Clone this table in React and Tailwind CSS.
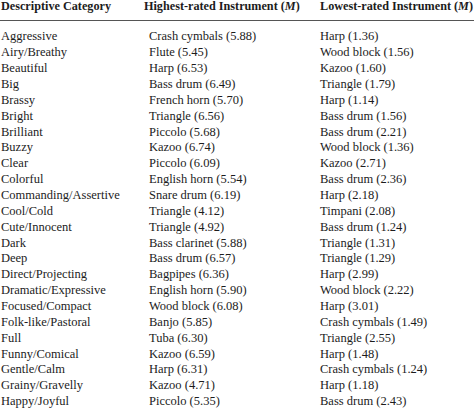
const ROWS = [
  ["Aggressive", "Crash cymbals (5.88)", "Harp (1.36)"],
  ["Airy/Breathy", "Flute (5.45)", "Wood block (1.56)"],
  ["Beautiful", "Harp (6.53)", "Kazoo (1.60)"],
  ["Big", "Bass drum (6.49)", "Triangle (1.79)"],
  ["Brassy", "French horn (5.70)", "Harp (1.14)"],
  ["Bright", "Triangle (6.56)", "Bass drum (1.56)"],
  ["Brilliant", "Piccolo (5.68)", "Bass drum (2.21)"],
  ["Buzzy", "Kazoo (6.74)", "Wood block (1.36)"],
  ["Clear", "Piccolo (6.09)", "Kazoo (2.71)"],
  ["Colorful", "English horn (5.54)", "Bass drum (2.36)"],
  ["Commanding/Assertive", "Snare drum (6.19)", "Harp (2.18)"],
  ["Cool/Cold", "Triangle (4.12)", "Timpani (2.08)"],
  ["Cute/Innocent", "Triangle (4.92)", "Bass drum (1.24)"],
  ["Dark", "Bass clarinet (5.88)", "Triangle (1.31)"],
  ["Deep", "Bass drum (6.57)", "Triangle (1.29)"],
  ["Direct/Projecting", "Bagpipes (6.36)", "Harp (2.99)"],
  ["Dramatic/Expressive", "English horn (5.90)", "Wood block (2.22)"],
  ["Focused/Compact", "Wood block (6.08)", "Harp (3.01)"],
  ["Folk-like/Pastoral", "Banjo (5.85)", "Crash cymbals (1.49)"],
  ["Full", "Tuba (6.30)", "Triangle (2.55)"],
  ["Funny/Comical", "Kazoo (6.59)", "Harp (1.48)"],
  ["Gentle/Calm", "Harp (6.31)", "Crash cymbals (1.24)"],
  ["Grainy/Gravelly", "Kazoo (4.71)", "Harp (1.18)"],
  ["Happy/Joyful", "Piccolo (5.35)", "Bass drum (2.43)"],
];

export default function App() {
  return (
    <div className="w-[474px] h-[411px] overflow-hidden bg-white text-[#1c1c1c] font-['Liberation_Serif',serif] text-[12.5px]">
      {/* header */}
      <div className="flex leading-[12px] text-[12.2px] font-bold whitespace-nowrap">
        <div className="w-[144px] pl-[1px]">Descriptive Category</div>
        <div className="w-[176px]">
          Highest-rated Instrument (<span className="italic">M</span>)
        </div>
        <div>
          Lowest-rated Instrument (<span className="italic">M</span>)
        </div>
      </div>
      <div className="mt-[8px] h-px bg-[#555]" />

      {/* rows */}
      <div className="mt-[8.4px] flex flex-col">
        {ROWS.map(([cat, hi, lo]) => (
          <div key={cat} className="flex leading-[15.86px] whitespace-nowrap">
            <div className="w-[149px] pl-[1px]">{cat}</div>
            <div className="w-[171px]">{hi}</div>
            <div>{lo}</div>
          </div>
        ))}
      </div>
    </div>
  );
}
